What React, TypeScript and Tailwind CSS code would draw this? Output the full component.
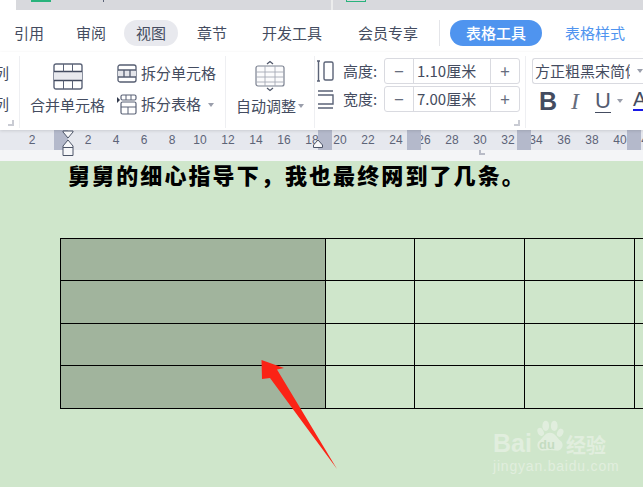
const sans = "font-['Noto_Sans_CJK_SC','Liberation_Sans',sans-serif]";

const rulerNums = ["2", "", "2", "4", "6", "8", "10", "12", "14", "16", "18", "20", "22", "24", "26", "28", "30", "32", "34", "36", "38", "40", "42"];
const rows = [0, 1, 2, 3];

function Grip({ className }: { className: string }) {
  return (
    <div className={"absolute top-0 h-[20px] w-[14px] bg-[#b4b9cb] flex items-center justify-center " + className}>
      <div className="h-[7px] w-[7px] bg-[radial-gradient(#5d6478_40%,transparent_45%)] bg-[length:2px_2px]" />
    </div>
  );
}

function MergeIcon() {
  return (
    <svg width="30" height="27" viewBox="0 0 30 27" fill="none" stroke="#5b6377">
      <rect x="1" y="1" width="28" height="25" rx="2" strokeWidth="1.4" />
      <rect x="1" y="9" width="28" height="9" fill="#e8e9ee" stroke="none" />
      <path d="M1 8.5H29M1 17.5H29" strokeWidth="1.6" stroke="#444c60" />
      <path d="M10.5 1V8.5M19.5 1V8.5M10.5 17.5V26M19.5 17.5V26" strokeWidth="1" />
    </svg>
  );
}

function SplitCellIcon() {
  return (
    <svg width="20" height="19" viewBox="0 0 20 19" fill="none" stroke="#555d71">
      <rect x="1" y="1" width="18" height="17" rx="2" strokeWidth="1.3" />
      <rect x="1" y="6.5" width="18" height="6" fill="#e4e5ea" stroke="none" />
      <path d="M1 6H19M1 13H19" strokeWidth="1.3" />
      <path d="M7 6V13M13 6V13" strokeWidth="1.3" />
    </svg>
  );
}

function SplitTableIcon() {
  return (
    <svg width="22" height="21" viewBox="0 0 22 21" fill="none" stroke="#5b6377">
      <path d="M2 3L5 6L2 9Z" fill="#333a4d" stroke="none" />
      <rect x="6" y="1" width="15" height="5" rx="1.5" strokeWidth="1.2" />
      <path d="M11 1V6M16 1V6" strokeWidth="1" />
      <rect x="6" y="8" width="15" height="12" rx="1.5" strokeWidth="1.2" />
      <path d="M6 13H21M13 13V20" strokeWidth="1" />
    </svg>
  );
}

function AutoFitIcon() {
  return (
    <svg width="30" height="32" viewBox="0 0 30 32" fill="none" stroke="#7b8190">
      <path d="M12 4L15 1.5L18 4M12 28L15 30.5L18 28" stroke="#4d5568" strokeWidth="1.2" />
      <rect x="1" y="6" width="28" height="20" rx="2" strokeWidth="1.2" fill="#fbfbfc" />
      <path d="M1 12H29M1 17H29M1 22H29M10 6V26M20 6V26" strokeWidth="0.9" stroke="#a5a9b5" />
    </svg>
  );
}

function Stepper({ value }: { value: string }) {
  return (
    <div className="flex h-[26px] w-[136px] rounded-[3px] border border-[#d9dae0] text-[15px] text-[#444c60]">
      <div className="flex w-[29px] items-center justify-center border-r border-[#d9dae0] text-[17px] text-[#666d7d]">−</div>
      <div className="flex-1 pl-[3px] leading-[24px] whitespace-nowrap">{value}</div>
      <div className="flex w-[29px] items-center justify-center border-l border-[#d9dae0] text-[17px] text-[#666d7d]">+</div>
    </div>
  );
}

function Corner() {
  return <div className="absolute right-[5px] bottom-[2px] h-[6px] w-[6px] border-r-2 border-b-2 border-[#c9cbd3]" />;
}

function Caret({ className = "" }: { className?: string }) {
  return <span className={"block h-0 w-0 shrink-0 border-x-[3px] border-t-[4px] border-x-transparent border-t-[#9a9eab] " + className} />;
}

function Watermark() {
  return (
    <div className="absolute left-[493px] top-[418px] h-[56px] w-[120px] text-[#e1eede]">
      <div className="absolute left-0 top-[10px] font-['Liberation_Sans',sans-serif] text-[25px] font-bold leading-[30px]">Bai</div>
      <svg className="absolute left-[40px] top-0" width="34" height="38" viewBox="0 0 40 40" fill="currentColor">
        <ellipse cx="9" cy="14" rx="3.5" ry="5" transform="rotate(-25 9 14)" />
        <ellipse cx="15" cy="7" rx="4" ry="6" />
        <ellipse cx="25" cy="7" rx="4" ry="6" />
        <ellipse cx="32" cy="15" rx="3.5" ry="5" transform="rotate(25 32 15)" />
        <path d="M20 15C26 15 28 21 33 25C37 29 34 37 27 36C23 35 17 35 13 36C6 37 3 29 7 25C12 21 14 15 20 15Z" />
      </svg>
      <div className="absolute left-[46px] top-[19px] font-['Liberation_Sans',sans-serif] text-[13px] font-bold leading-[15px] text-[#c4dcc1]">du</div>
      <div className={"absolute left-[73px] top-[14px] text-[20px] leading-[26px] font-bold whitespace-nowrap " + sans}>经验</div>
      <div className="absolute left-0 top-[40px] font-['Liberation_Sans',sans-serif] text-[14px] leading-[16px] tracking-[0.8px] whitespace-nowrap">jingyan.baidu.com</div>
    </div>
  );
}

export default function App() {
  return (
    <div className={"relative h-[487px] w-[643px] overflow-hidden bg-[#cfe6cb] " + sans}>
      {/* title strip */}
      <div className="h-[10px] bg-white pl-[16px]">
        <div className="flex h-full bg-[#d8d9dd]">
          <div className="ml-[15px] h-[2px] w-[20px] bg-[#29b37c]" />
          <div className="ml-[52px] h-[2px] w-px bg-[#5b6377]" />
          <div className="ml-[227px] h-full w-[2px] bg-[#eceded]" />
          <div className="ml-[13px] h-[2px] w-[20px] border-x border-b border-[#29b37c]" />
        </div>
      </div>

      {/* tabs */}
      <div className="flex h-[42px] items-center bg-white pt-[4px] text-[15px] text-[#444c60]">
        <span className="ml-[14px]">引用</span>
        <span className="ml-[32px]">审阅</span>
        <span className="ml-[18px] flex h-[26px] w-[54px] items-center justify-center rounded-full bg-[#e8e9ee]">视图</span>
        <span className="ml-[19px]">章节</span>
        <span className="ml-[35px]">开发工具</span>
        <span className="ml-[36px]">会员专享</span>
        <div className="ml-[21px] h-[26px] w-px bg-[#e4e5e9]" />
        <span className="ml-[10px] flex h-[26px] w-[92px] items-center justify-center rounded-full bg-[#4f94ef] font-medium text-white">表格工具</span>
        <span className="ml-[23px] text-[#4f94ef]">表格样式</span>
      </div>

      {/* ribbon */}
      <div className="relative z-10 flex h-[78px] bg-white text-[15px] text-[#444c60] shadow-[0_1px_3px_rgba(0,0,0,0.12)]">
        <div className="relative mt-[4px] h-[72px] w-[20px] shrink-0 border-r border-[#eeeff2]">
          <div className="absolute right-[10px] top-[7px] leading-[20px]">列</div>
          <div className="absolute right-[10px] top-[38px] leading-[20px]">列</div>
          <Corner />
        </div>
        <div className="mt-[4px] flex h-[72px] w-[206px] shrink-0 border-r border-[#eeeff2]">
          <div className="flex w-[95px] flex-col items-center pt-[7px]">
            <MergeIcon />
            <span className="mt-[5px] whitespace-nowrap leading-[20px]">合并单元格</span>
          </div>
          <div className="flex flex-col pt-[7px]">
            <div className="flex h-[20px] items-center gap-[4px] pl-[2px]">
              <SplitCellIcon />
              <span className="whitespace-nowrap">拆分单元格</span>
            </div>
            <div className="mt-[11px] flex h-[21px] items-center gap-[4px]">
              <SplitTableIcon />
              <span className="mr-[3px] whitespace-nowrap">拆分表格</span>
              <Caret />
            </div>
          </div>
        </div>
        <div className="mt-[4px] flex h-[72px] w-[89px] shrink-0 flex-col items-center border-r border-[#eeeff2] pt-[4px]">
          <AutoFitIcon />
          <div className="mt-[4px] flex items-center gap-[2px] leading-[20px] whitespace-nowrap">
            自动调整
            <Caret />
          </div>
        </div>
        <div className="relative mt-[4px] flex h-[72px] w-[211px] shrink-0 flex-col gap-[2px] border-r border-[#eeeff2] pt-[2px] pl-[2px]">
          <div className="flex items-center">
            <svg width="17" height="22" viewBox="0 0 17 22" fill="none" stroke="#5b6377" strokeWidth="1.4"><path d="M0 1H3M0 21H3M1.5 1V21" /><rect x="7" y="2" width="9" height="18" rx="1.5" /></svg>
            <span className="ml-[9px] w-[41px] whitespace-nowrap">高度:</span>
            <Stepper value="1.10厘米" />
          </div>
          <div className="flex items-center">
            <svg width="17" height="22" viewBox="0 0 17 22" fill="none" stroke="#5b6377" strokeWidth="1.4"><path d="M1 3H16M1 7H16V16H1M1 20H16" /></svg>
            <span className="ml-[9px] w-[41px] whitespace-nowrap">宽度:</span>
            <Stepper value="7.00厘米" />
          </div>
          <Corner />
        </div>
        <div className="mt-[4px] flex h-[72px] flex-1 flex-col overflow-hidden pl-[6px] pt-[2px]">
          <div className="flex h-[26px] w-[111px] shrink-0 items-center overflow-hidden rounded-l-[3px] border border-r-0 border-[#d9dae0] pl-[2px] whitespace-nowrap text-[15px]">
            <span className="w-[95px] shrink-0 overflow-hidden">方正粗黑宋简体</span>
            <Caret className="ml-[7px]" />
          </div>
          <div className="mt-[4px] flex items-center text-[#444c60]">
            <span className="ml-[7px] font-['Liberation_Sans',sans-serif] text-[25px] font-bold leading-[26px]">B</span>
            <span className="ml-[14px] font-['Liberation_Serif',serif] text-[24px] italic leading-[26px] text-[#666d7d]">I</span>
            <span className="ml-[16px] -mt-[1px] border-b border-[#444c60] font-['Liberation_Sans',sans-serif] text-[22px] leading-[23px] text-[#555d71]">U</span>
            <Caret className="ml-[6px]" />
            <span className="ml-[10px] -mt-[3px] border-b-2 border-[#1a1ae6] font-['Liberation_Sans',sans-serif] text-[20px] leading-[20px]">A</span>
          </div>
        </div>
      </div>

      {/* ruler */}
      <div className="relative h-[20px] bg-[#e6e8ee]">
        <div className="flex pl-[18px] font-['Liberation_Sans',sans-serif] text-[12px] leading-[20px] text-[#5d6478]">
          {rulerNums.map((n, i) => (
            <span key={i} className="w-[28px] shrink-0 text-center">{n}</span>
          ))}
        </div>
        <Grip className="left-[54px]" />
        <Grip className="left-[318px]" />
        <Grip className="left-[407px]" />
        <Grip className="left-[517px]" />
        <Grip className="left-[627px]" />
        <svg className="absolute left-[62px] top-0 z-10" width="12" height="26" viewBox="0 0 12 26" fill="#f6f7f9" stroke="#4d5568">
          <path d="M1 1H11V2L6 8L1 2Z" />
          <path d="M6 10L11 16V25.5H1V16Z" />
          <path d="M1 17.5H11" />
        </svg>
        <svg className="absolute left-[313px] top-[8px]" width="10" height="10" viewBox="0 0 10 10" fill="#f6f7f9" stroke="#4d5568">
          <path d="M5 2L0.5 7V9.5H9.5V7Z" />
        </svg>
      </div>

      {/* ruler bottom strip */}
      <div className="relative h-[11px] bg-[#f4f5f7]">
        <div className="absolute left-[479px] top-0 h-[5px] w-[6px] border-b-2 border-l-2 border-[#b9bcc7]" />
      </div>

      {/* document */}
      <div className="relative h-[326px] pl-[60px]">
        <p className="pl-[8px] text-[22px] leading-[26px] font-black tracking-[2.1px] text-black whitespace-nowrap">
          舅舅的细心指导下，我也最终网到了几条。
        </p>
        <div className="mt-[51px] w-[600px] border-t border-l border-black">
          {rows.map((r) => (
            <div key={r} className={"flex " + (r === 1 || r === 3 ? "h-[43px]" : "h-[42px]")}>
              <div className="w-[265px] shrink-0 border-r border-b border-black bg-[#a1b49d]" />
              <div className="w-[89px] shrink-0 border-r border-b border-black" />
              <div className="w-[110px] shrink-0 border-r border-b border-black" />
              <div className="w-[110px] shrink-0 border-r border-b border-black" />
              <div className="flex-1 border-b border-black" />
            </div>
          ))}
        </div>
      </div>

      <Watermark />

      {/* red annotation arrow */}
      <svg className="absolute left-[255px] top-[355px]" width="90" height="120" viewBox="0 0 90 120" fill="#fb2316">
        <path d="M6.5 5L29 13L22 14.5L82 114L15 23L7 24Z" />
      </svg>
    </div>
  );
}
